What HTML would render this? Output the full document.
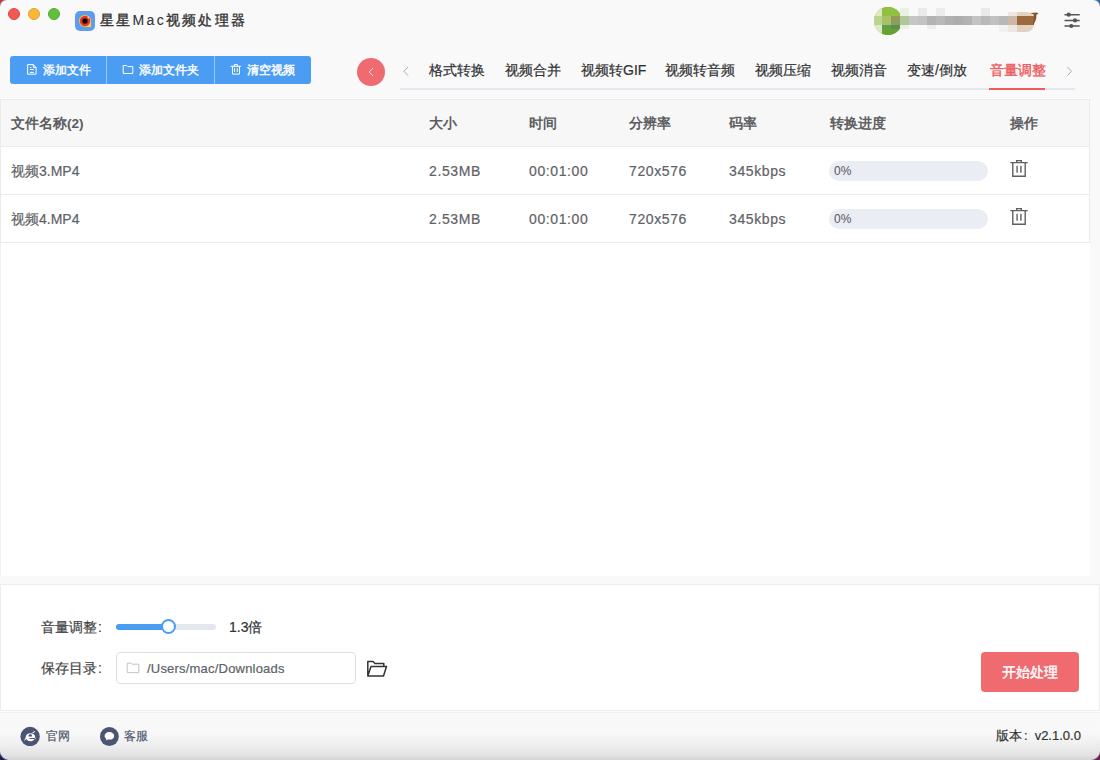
<!DOCTYPE html>
<html><head><meta charset="utf-8">
<style>
*{box-sizing:border-box;margin:0;padding:0}
html,body{width:1100px;height:760px;overflow:hidden;background:#fff}
body{font-family:"Liberation Sans",sans-serif;position:relative;color:#333}
.abs{position:absolute}
.bgc{position:absolute;width:20px;height:20px}
.win{position:absolute;left:0;top:0;width:1100px;height:760px;background:#f9f9f9;border-radius:7px 7px 10px 10px;overflow:hidden;box-shadow:0 0 0 1px rgba(150,150,150,0.5)}
.tl{position:absolute;top:8px;width:12px;height:12px;border-radius:50%}
.title{position:absolute;left:100px;top:10px;font-size:14px;color:#333;letter-spacing:2.2px;line-height:20px;white-space:nowrap;-webkit-text-stroke:0.35px #333}
.btngrp{position:absolute;left:10px;top:56px;width:301px;height:28px;background:#4b9cf3;border-radius:3px}
.bt{position:absolute;top:0;height:28px;line-height:28px;color:#fff;font-size:12px;white-space:nowrap;-webkit-text-stroke:0.4px #fff}
.sep{position:absolute;top:0;width:1px;height:28px;background:#9ec8f7}
.back{position:absolute;left:357px;top:58px;width:28px;height:28px;border-radius:50%;background:#ef6b6f}
.tabline{position:absolute;left:400px;top:88px;width:675px;height:2px;background:#e4e7ee}
.tab{position:absolute;top:60px;font-size:14px;line-height:20px;color:#303133;white-space:nowrap;-webkit-text-stroke:0.2px}
.tbl{position:absolute;left:0;top:98px;width:1090px;height:478px;background:#fff;box-shadow:inset 1px 0 0 #f0f0f0}
.thead{position:absolute;left:0;top:1px;width:1090px;height:48px;background:#f7f7f7;border:1px solid #ebebeb}
.row{position:absolute;left:0;width:1090px;height:48px;border:1px solid #ebebeb;border-top:none;background:#fff}
.cell{position:absolute;font-size:14px;line-height:20px;color:#606266;white-space:nowrap}
.th{font-weight:bold;color:#5c5d61;font-size:13.6px}
.num{letter-spacing:0.6px}
.cell{-webkit-text-stroke:0.2px}
.th{-webkit-text-stroke:0}
.prog{position:absolute;left:828px;width:159px;height:20px;border-radius:10px;background:#ebedf5}
.prog span{position:absolute;left:5px;top:2px;font-size:12px;line-height:16px;color:#555}
.panel{position:absolute;left:0;top:584px;width:1100px;height:127px;background:#fff;box-shadow:inset 0 0 0 1px #ececec}
.footer{position:absolute;left:0;top:711px;width:1100px;height:49px;background:linear-gradient(#f9f9f9 0,#f8f8f8 45%,#eeeeee 70%,#e4e4e4 88%,#d6d6d6 100%);box-shadow:inset 0 1px 0 #fdfdfd,inset 0 2px 0 #efefef}
</style></head><body>
<div class="bgc" style="left:0;top:0;background:#c62a5c"></div>
<div class="bgc" style="right:0;top:0;background:#1d6db4"></div>
<div class="bgc" style="left:0;bottom:0;background:#1d1f52"></div>
<div class="bgc" style="right:0;bottom:0;background:#6e1d5c"></div>
<div class="win">
  <div class="tl" style="left:8px;background:#ef5b54;border:1px solid #e2463f"></div>
  <div class="tl" style="left:28px;background:#f7b838;border:1px solid #e3a22b"></div>
  <div class="tl" style="left:48px;background:#5fc13b;border:1px solid #4fab2f"></div>
  <svg class="abs" style="left:75px;top:11px" width="20" height="20" viewBox="0 0 20 20">
    <rect x="0" y="0" width="20" height="20" rx="5" fill="#5d9cf0"/>
    <path d="M10 4 A6 6 0 1 0 10 16 L16 16 L16 10 A6 6 0 0 0 10 4Z" fill="#f3d23a"/>
    <circle cx="10" cy="10" r="5.2" fill="#e8322c"/>
    <circle cx="10" cy="10" r="3.1" fill="#7a1818"/>
    <circle cx="10" cy="10" r="2.2" fill="#000"/>
    <circle cx="13.2" cy="6.8" r="0.8" fill="#fbe4e4"/>
  </svg>
  <div class="title">星星<span style="letter-spacing:2.4px;-webkit-text-stroke:0.1px #333">Mac</span>视频处理器</div>

  <!-- avatar mosaic -->
  <div class="abs" style="left:874px;top:7px;width:28px;height:28px;border-radius:50%;background:#86b83a;overflow:hidden">
    <div class="abs" style="left:0;top:0;width:8px;height:28px;background:#dbe9c6"></div>
    <div class="abs" style="left:0;top:9px;width:8px;height:9px;background:#b9d68f"></div>
    <div class="abs" style="left:8px;top:0;width:18px;height:9px;background:#92c040"></div>
    <div class="abs" style="left:8px;top:9px;width:9px;height:9px;background:#aac262"></div>
    <div class="abs" style="left:17px;top:9px;width:9px;height:9px;background:#8f9a5c"></div>
    <div class="abs" style="left:8px;top:18px;width:9px;height:4px;background:#5e9e52"></div>
    <div class="abs" style="left:17px;top:18px;width:9px;height:4px;background:#53934c"></div>
    <div class="abs" style="left:8px;top:22px;width:18px;height:6px;background:#6aa232"></div>
    <div class="abs" style="left:26px;top:0;width:2px;height:28px;background:#e3edd7"></div>
    <div class="abs" style="left:26px;top:9px;width:2px;height:9px;background:#b1c99a"></div>
  </div>
  <div class="abs" style="left:900px;top:8px;width:9px;height:21px;background:#eaf1e2"></div>
  <div class="abs" style="left:900px;top:16px;width:9px;height:9px;background:#afc89b"></div>
  <div class="abs" style="left:909px;top:16px;width:100px;height:9px;background:linear-gradient(90deg,#c6c6c6 0,#c6c6c6 9%,#c2c2c2 9%,#c2c2c2 18%,#b3b3b3 18%,#b3b3b3 27%,#b9b9b9 27%,#b9b9b9 36%,#b1b1b1 36%,#b1b1b1 45%,#adadad 45%,#adadad 54%,#b2b2b2 54%,#b2b2b2 63%,#c3c3c3 63%,#c3c3c3 72%,#b9b9b9 72%,#b9b9b9 81%,#c1c1c1 81%,#c1c1c1 90%,#b8b8b8 90%)"></div>
  <div class="abs" style="left:918px;top:8px;width:9px;height:8px;background:#eaeaea"></div>
  <div class="abs" style="left:936px;top:8px;width:9px;height:8px;background:#ececec"></div>
  <div class="abs" style="left:927px;top:25px;width:9px;height:4px;background:#ececec"></div>
  <div class="abs" style="left:981px;top:8px;width:9px;height:8px;background:#e9e9e9"></div>
  <div class="abs" style="left:999px;top:25px;width:9px;height:7px;background:#f1f1f1"></div>
  <div class="abs" style="left:1008px;top:12px;width:9px;height:20px;background:#eee6e0"></div>
  <div class="abs" style="left:1008px;top:16px;width:9px;height:9px;background:#cdb8a8"></div>
  <div class="abs" style="left:1017px;top:12px;width:17px;height:20px;background:#e2d2c2;border-radius:0 8px 8px 0"></div>
  <div class="abs" style="left:1017px;top:16px;width:17px;height:9px;background:#9d6a40"></div>
  <svg class="abs" style="left:1030px;top:12px" width="10" height="14" viewBox="0 0 10 14"><path d="M0 1 L7 0.5 L8.5 2 L6.5 2.5 Q6.5 9 3 13 Q4.5 7 3.5 2.5 Z" fill="#8a5222"/></svg>

  <!-- settings icon -->
  <svg class="abs" style="left:1060px;top:8px" width="26" height="26" viewBox="0 0 26 26">
    <g stroke="#555" stroke-width="1.5" fill="none"><line x1="4.5" y1="6.7" x2="19.7" y2="6.7"/><line x1="4.5" y1="12.4" x2="19.7" y2="12.4"/><line x1="4.5" y1="18" x2="19.7" y2="18"/></g>
    <g fill="#555"><circle cx="8.7" cy="6.7" r="2.1"/><circle cx="15" cy="12.4" r="2.1"/><circle cx="11.3" cy="18" r="2.1"/></g>
  </svg>

  <div class="btngrp">
    <svg class="abs" style="left:16px;top:7px" width="12" height="13" viewBox="0 0 12 13">
      <path d="M1.6 1.6 H7.3 L10.1 4.4 V11.2 H1.6 Z M7.3 1.6 V4.4 H10.1" fill="none" stroke="#fff" stroke-width="1"/>
      <path d="M3.9 4.5 H5.3 M3.9 6.5 H7.8 M3.9 9.4 H7.8" stroke="#fff" stroke-width="1" fill="none"/>
    </svg>
    <div class="bt" style="left:33px">添加文件</div>
    <div class="sep" style="left:96px"></div>
    <svg class="abs" style="left:112px;top:8px" width="12" height="11" viewBox="0 0 12 11">
      <path d="M1.2 1.5 H4.8 L5.8 2.6 H10.8 V9.5 H1.2 Z" fill="none" stroke="#fff" stroke-width="1"/>
    </svg>
    <div class="bt" style="left:129px">添加文件夹</div>
    <div class="sep" style="left:204px"></div>
    <svg class="abs" style="left:220px;top:7px" width="12" height="13" viewBox="0 0 12 13">
      <path d="M0.5 3.3 H11 M2.5 3.3 V11.1 H9.5 V3.3 M4.3 3.3 V1.6 H7.4 V3.3 M4.6 5.2 V9 M7.3 5.2 V9" fill="none" stroke="#fff" stroke-width="1"/>
    </svg>
    <div class="bt" style="left:237px">清空视频</div>
  </div>

  <div class="back"><svg class="abs" style="left:0;top:0" width="28" height="28" viewBox="0 0 28 28"><path d="M16 10 L12.2 14 L16 18" fill="none" stroke="#fde" stroke-width="1"/></svg></div>
  <svg class="abs" style="left:398px;top:62px" width="14" height="18" viewBox="0 0 14 18"><path d="M10 5 L6 9.3 L10 13.6" fill="none" stroke="#aaa" stroke-width="1"/></svg>
  <svg class="abs" style="left:1062px;top:62px" width="14" height="18" viewBox="0 0 14 18"><path d="M5.5 5 L9.5 9.3 L5.5 13.6" fill="none" stroke="#aaa" stroke-width="1"/></svg>
  <div class="tabline"></div>
  <div class="abs" style="left:989px;top:88px;width:56px;height:2px;background:#ef5a5e"></div>
  <div class="tab" style="left:429px">格式转换</div>
  <div class="tab" style="left:505px">视频合并</div>
  <div class="tab" style="left:581px">视频转GIF</div>
  <div class="tab" style="left:665px">视频转音频</div>
  <div class="tab" style="left:755px">视频压缩</div>
  <div class="tab" style="left:831px">视频消音</div>
  <div class="tab" style="left:907px">变速/倒放</div>
  <div class="tab" style="left:990px;color:#ee5a5e;-webkit-text-stroke:0.35px #ee5a5e">音量调整</div>

  <div class="tbl">
    <div class="thead">
      <div class="cell th" style="left:10px;top:14px">文件名称(2)</div>
      <div class="cell th" style="left:428px;top:14px">大小</div>
      <div class="cell th" style="left:528px;top:14px">时间</div>
      <div class="cell th" style="left:628px;top:14px">分辨率</div>
      <div class="cell th" style="left:728px;top:14px">码率</div>
      <div class="cell th" style="left:829px;top:14px">转换进度</div>
      <div class="cell th" style="left:1009px;top:14px">操作</div>
    </div>
    <div class="row" style="top:49px">
      <div class="cell" style="left:10px;top:14px">视频3.MP4</div>
      <div class="cell num" style="left:428px;top:14px">2.53MB</div>
      <div class="cell num" style="left:528px;top:14px">00:01:00</div>
      <div class="cell num" style="left:628px;top:14px">720x576</div>
      <div class="cell num" style="left:728px;top:14px">345kbps</div>
      <div class="prog" style="top:14px"><span>0%</span></div>
      <svg class="abs" style="left:1003px;top:7px" width="30" height="30" viewBox="0 0 30 30"><path d="M6.3 8.6 H23.7 M8.8 8.6 V22.2 H21.2 V8.6 M12.7 8.6 V6.6 H17.3 V8.6 M13.1 11.8 V18.8 M16.9 11.8 V18.8" fill="none" stroke="#606060" stroke-width="1.4"/></svg>
    </div>
    <div class="row" style="top:97px">
      <div class="cell" style="left:10px;top:14px">视频4.MP4</div>
      <div class="cell num" style="left:428px;top:14px">2.53MB</div>
      <div class="cell num" style="left:528px;top:14px">00:01:00</div>
      <div class="cell num" style="left:628px;top:14px">720x576</div>
      <div class="cell num" style="left:728px;top:14px">345kbps</div>
      <div class="prog" style="top:14px"><span>0%</span></div>
      <svg class="abs" style="left:1003px;top:7px" width="30" height="30" viewBox="0 0 30 30"><path d="M6.3 8.6 H23.7 M8.8 8.6 V22.2 H21.2 V8.6 M12.7 8.6 V6.6 H17.3 V8.6 M13.1 11.8 V18.8 M16.9 11.8 V18.8" fill="none" stroke="#606060" stroke-width="1.4"/></svg>
    </div>
  </div>

  <div class="panel">
    <div class="cell" style="left:41px;top:33px;color:#444">音量调整<span style="margin-left:1px">:</span></div>
    <div class="abs" style="left:116px;top:40px;width:100px;height:6px;border-radius:3px;background:#e4e7ed"></div>
    <div class="abs" style="left:116px;top:40px;width:53px;height:6px;border-radius:3px;background:#4b9cf3"></div>
    <div class="abs" style="left:161px;top:35px;width:15px;height:15px;border-radius:50%;background:#fff;border:2px solid #4b9cf3"></div>
    <div class="cell" style="left:229px;top:33px;color:#333">1.3倍</div>
    <div class="cell" style="left:41px;top:74px;color:#444">保存目录<span style="margin-left:1px">:</span></div>
    <div class="abs" style="left:116px;top:68px;width:240px;height:32px;border:1px solid #dcdfe6;border-radius:4px"></div>
    <svg class="abs" style="left:126px;top:78px" width="14" height="12" viewBox="0 0 14 12"><path d="M1.2 1.2 H5 L6 2.2 H12.8 V10.6 H1.2 Z" fill="none" stroke="#c0c4cc" stroke-width="1"/></svg>
    <div class="cell" style="left:147px;top:75px;font-size:13px;letter-spacing:0.2px;color:#606266">/Users/mac/Downloads</div>
    <svg class="abs" style="left:366px;top:76px" width="22" height="18" viewBox="0 0 22 18"><path d="M1.8 16 V1.5 H7 L9 3.5 H17.8 V6.5 M1.8 16 L5 6.5 H20.5 L17.5 16 Z" fill="none" stroke="#333" stroke-width="1.5" stroke-linejoin="round"/></svg>
    <div class="abs" style="left:981px;top:68px;width:98px;height:40px;border-radius:4px;background:#ef6b6f;color:#fff;font-size:14px;line-height:40px;text-align:center;-webkit-text-stroke:0.4px #fff">开始处理</div>
  </div>
  <div class="footer">
    <svg class="abs" style="left:20px;top:15px" width="20" height="20" viewBox="0 0 20 20">
      <circle cx="10.1" cy="10.5" r="9.7" fill="#4a5573"/>
      <path fill="#fff" fill-rule="evenodd" d="M5.7 11.2 A4.75 4 0 1 0 15.2 11.2 A4.75 4 0 1 0 5.7 11.2 Z M8.4 10.6 Q8.6 8.1 10.3 8.1 Q12.2 8.1 12.2 10.6 Z M9.2 11.9 H15.6 V12.9 H10 Q9.4 12.6 9.2 11.9 Z"/>
      <path d="M4.1 15 Q4.6 12.4 7 9.8 L7.6 11.4 Q5.6 13.6 4.1 15Z" fill="#fff"/>
      <path d="M12 6.5 Q13.8 5.2 15.5 4.9 Q14.6 5.8 13.6 6.9Z" fill="#fff"/>
    </svg>
    <div class="cell" style="left:46px;top:15px;font-size:12px;color:#4f586c">官网</div>
    <svg class="abs" style="left:99px;top:15px" width="20" height="20" viewBox="0 0 20 20">
      <circle cx="10.4" cy="10.5" r="9.4" fill="#4a5573"/>
      <path d="M10.2 5.9 C13 5.9 15.2 7.6 15.2 9.9 C15.2 12.3 13 13.6 10.4 13.6 C9.8 13.6 9.3 13.5 8.8 13.4 L6.9 14.4 L7.3 12.7 C6.2 12 5.6 11 5.6 9.9 C5.6 7.6 7.4 5.9 10.2 5.9Z" fill="#fff"/>
    </svg>
    <div class="cell" style="left:124px;top:15px;font-size:12px;color:#4f586c">客服</div>
    <div class="cell" style="left:996px;top:15px;font-size:13px;color:#333">版本<span style="margin-left:2px;margin-right:7px">:</span>v2.1.0.0</div>
  </div>
</div>
</body></html>
